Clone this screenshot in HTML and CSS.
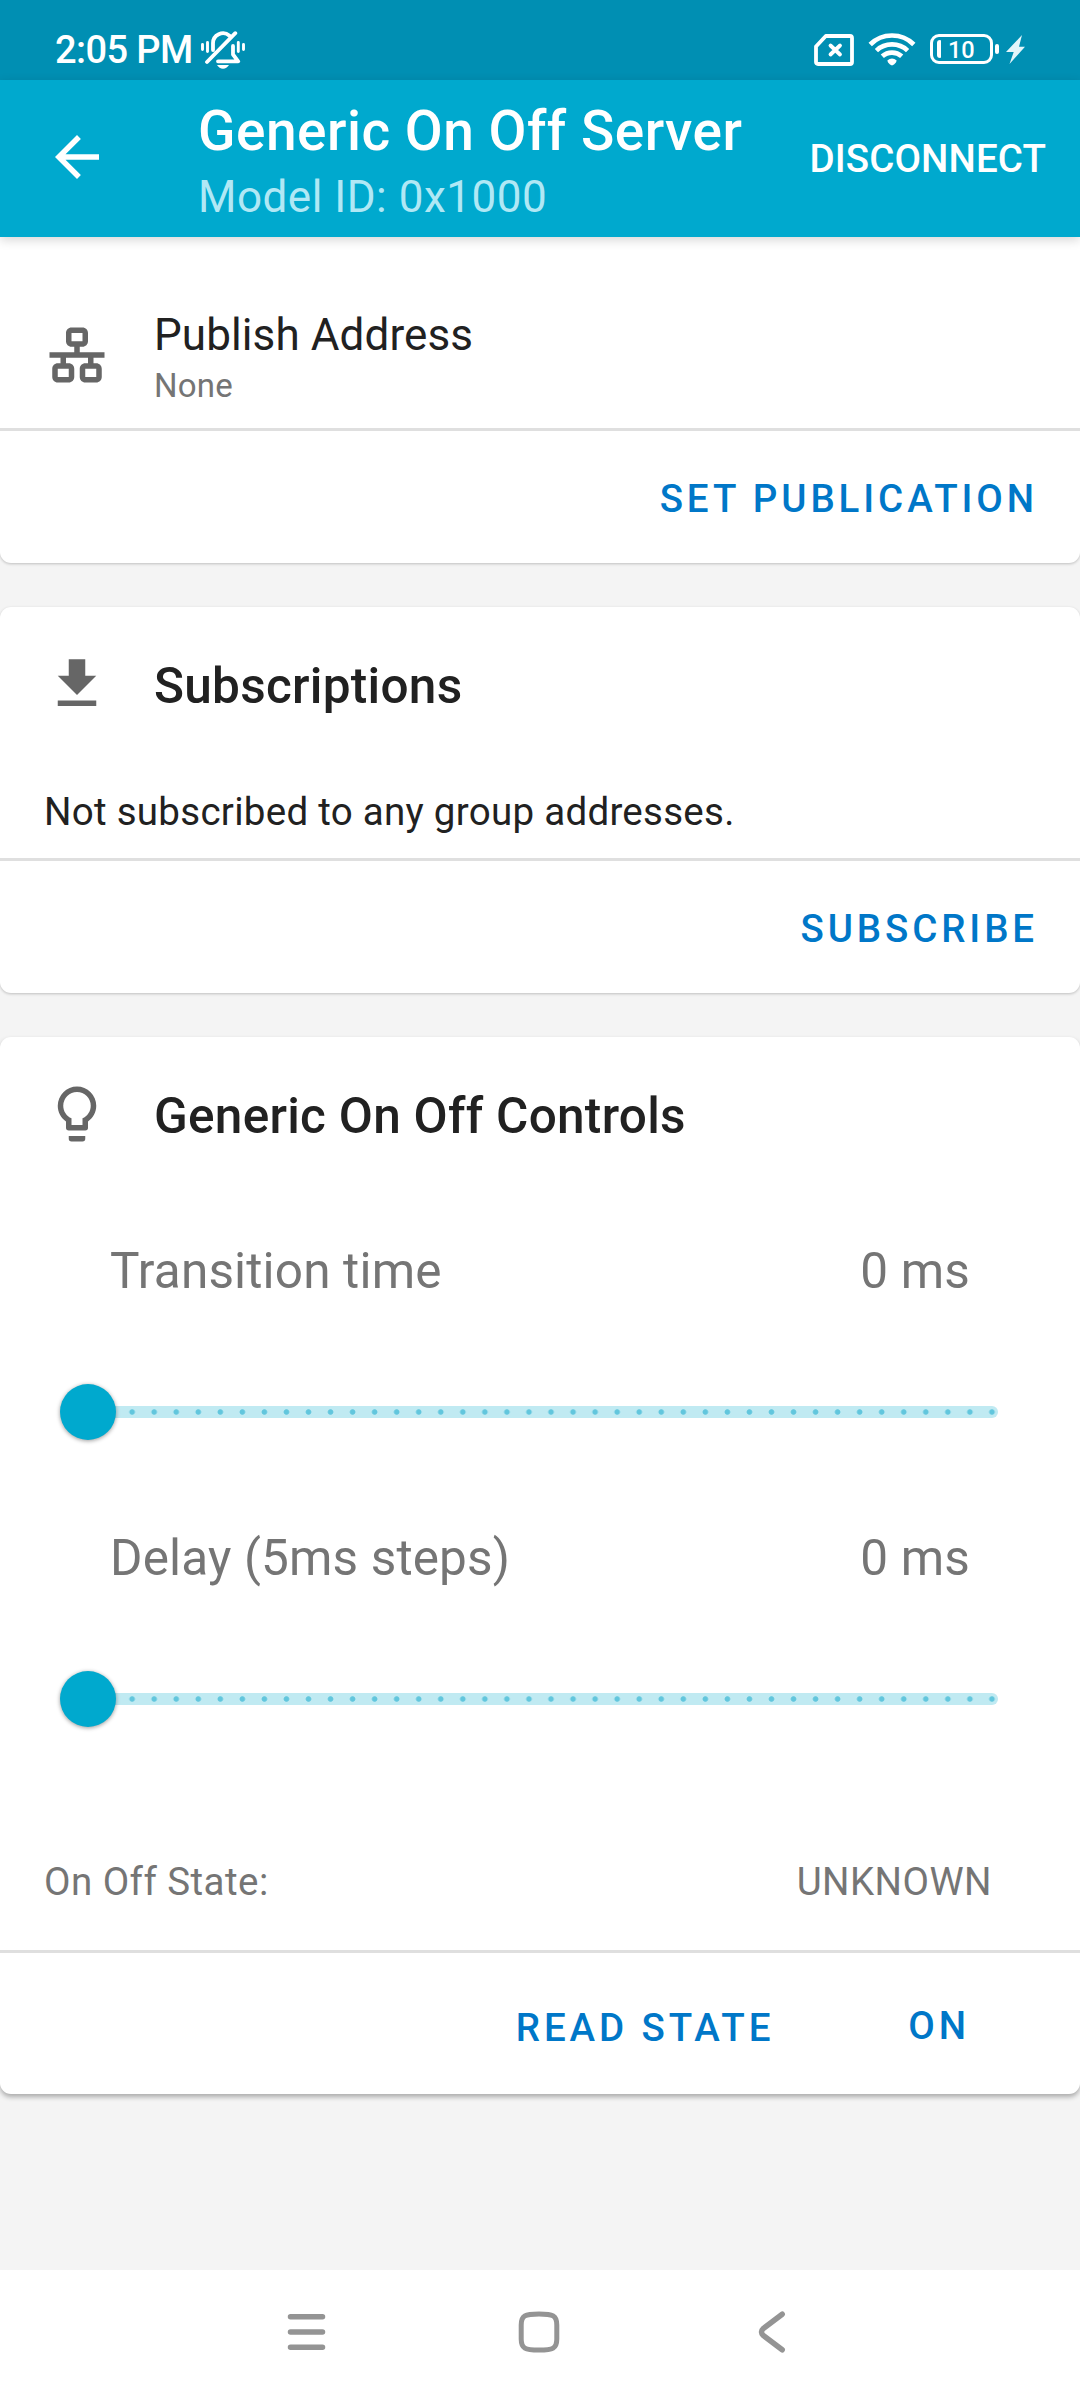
FILE: index.html
```html
<!DOCTYPE html>
<html lang="en">
<head>
<meta charset="utf-8">
<title>Generic On Off Server</title>
<link rel="stylesheet" href="styles.css">
</head>
<body>
<div class="screen">
  <header class="status-bar">
    <span class="clock">2:05 PM</span>
    <svg class="icon-bell" width="46" height="40" viewBox="200 30 46 40" fill="none" stroke="#fff" stroke-linecap="round" stroke-linejoin="round">
      <path stroke-width="2.9" d="M202.5 44.5v5M207.5 42.5v9M238.3 42.5v9M243.5 44.5v5"/>
      <path stroke-width="3.8" d="M213 50V43.500a10 10 0 0 1 16.500-7.800M235.300 33.200L207 62M233 46v8.500L238.200 61.300H218"/>
      <path fill="#fff" stroke="none" d="M217 65h12q-2.300 3.700-6 3.700t-6-3.700z"/>
    </svg>
    <div class="status-icons">
      <svg width="40" height="32" viewBox="0 0 40 32" fill="none" stroke="#fff" stroke-width="3.800" stroke-linejoin="round" stroke-linecap="round">
        <path d="M11.800 2H36Q38 2 38 4V28Q38 30 36 30H4Q2 30 2 28V12.500z"/>
        <path d="M16.500 11.500L26 20.500M26 11.500L16.500 20.500"/>
      </svg>
      <svg class="icon-wifi" width="48" height="36" viewBox="0 0 48 36" fill="none" stroke="#fff" stroke-width="4.700">
        <path d="M2.200 13.500C14 1.500 34 1.500 45.800 13.500"/>
        <path d="M8.400 19.600C17 11.400 31 11.400 39.600 19.600"/>
        <path d="M14.300 25.300C19.800 20.300 28.200 20.300 33.700 25.300"/>
        <path fill="#fff" stroke="none" d="M19.300 29.500Q24 25.300 28.700 29.500Q28.500 31.300 26 33.600Q24 35.200 22 33.600Q19.500 31.300 19.300 29.500z"/>
      </svg>
      <div class="battery"><i class="battery-level"></i><span class="battery-text">10</span></div>
      <i class="battery-cap"></i>
      <svg class="icon-bolt" width="19" height="29" viewBox="0 0 19 29"><path fill="#e3f5fa" d="M16 0L0 17H7.700L3.500 29L19 11.800H13z"/></svg>
    </div>
  </header>

  <div class="app-bar">
    <svg class="icon back" viewBox="0 0 24 24"><path d="M20,11H7.830l5.590-5.590L12,4l-8,8 8,8 1.410-1.410L7.830,13H20v-2z"/></svg>
    <div class="titles">
      <h1 class="title">Generic On Off Server</h1>
      <div class="subtitle">Model ID: 0x1000</div>
    </div>
    <span class="disconnect">DISCONNECT</span>
  </div>

  <main class="content">
    <section class="card card-publish">
      <div class="publish-row">
        <svg class="icon" viewBox="0 0 24 24"><path d="M10,2C8.890,2 8,2.890 8,4V7C8,8.110 8.890,9 10,9H11V11H2V13H6V15H5C3.890,15 3,15.890 3,17V20C3,21.110 3.890,22 5,22H9C10.110,22 11,21.110 11,20V17C11,15.890 10.110,15 9,15H8V13H16V15H15C13.890,15 13,15.890 13,17V20C13,21.110 13.890,22 15,22H19C20.110,22 21,21.110 21,20V17C21,15.890 20.110,15 19,15H18V13H22V11H13V9H14C15.110,9 16,8.110 16,7V4C16,2.890 15.110,2 14,2H10M10,4H14V7H10V4M5,17H9V20H5V17M15,17H19V20H15V17Z"/></svg>
        <div>
          <div class="row-title">Publish Address</div>
          <div class="row-summary">None</div>
        </div>
      </div>
      <div class="actions"><span class="button">SET PUBLICATION</span></div>
    </section>

    <section class="card card-subscriptions">
      <div class="card-header">
        <svg class="icon" viewBox="0 0 24 24"><path d="M5,20H19V18H5M19,9H15V3H9V9H5L12,16L19,9Z"/></svg>
        <h2 class="card-title">Subscriptions</h2>
      </div>
      <p class="note">Not subscribed to any group addresses.</p>
      <div class="actions"><span class="button">SUBSCRIBE</span></div>
    </section>

    <section class="card card-controls">
      <div class="card-header">
        <svg class="icon" viewBox="0 0 24 24"><path d="M12,2A7,7 0 0,1 19,9C19,11.380 17.810,13.470 16,14.740V17A1,1 0 0,1 15,18H9A1,1 0 0,1 8,17V14.740C6.190,13.470 5,11.380 5,9A7,7 0 0,1 12,2M9,21V20H15V21A1,1 0 0,1 14,22H10A1,1 0 0,1 9,21M12,4A5,5 0 0,0 7,9C7,11.050 8.230,12.810 10,13.580V16H14V13.580C15.770,12.810 17,11.050 17,9A5,5 0 0,0 12,4Z"/></svg>
        <h2 class="card-title">Generic On Off Controls</h2>
      </div>
      <div class="setting">
        <div class="setting-label"><span>Transition time</span><span>0 ms</span></div>
        <div class="slider"><i class="thumb"></i></div>
      </div>
      <div class="setting">
        <div class="setting-label"><span>Delay (5ms steps)</span><span>0 ms</span></div>
        <div class="slider"><i class="thumb"></i></div>
      </div>
      <div class="state"><span>On Off State:</span><span>UNKNOWN</span></div>
      <div class="actions state-actions"><span class="button read">READ STATE</span><span class="button on">ON</span></div>
    </section>
  </main>

  <nav class="nav-bar">
    <svg width="40" height="42" viewBox="0 0 40 42"><path d="M3.500 5.700h32M3.500 21h32M3.500 36.300h32"/></svg>
    <svg width="42" height="42" viewBox="0 0 42 42"><path d="M21 3C35 3 38.800 4.500 38.800 14V28C38.800 37.500 35 39 21 39S3.200 37.500 3.200 28V14C3.200 4.500 7 3 21 3z" class="home"/></svg>
    <svg width="28" height="42" viewBox="0 0 28 42"><path d="M24.200 3.200L5.300 17.500Q1.700 21 5.300 24.500L24.200 38.800"/></svg>
  </nav>
</div>
</body>
</html>
```
FILE: styles.css
```css
* { box-sizing: border-box; }

body {
  margin: 0;
  font-family: Roboto, "Liberation Sans", sans-serif;
  background: #f4f4f4;
  color: #212121;
}

h1, h2, p { margin: 0; font-weight: 500; }
svg { display: block; flex: none; }
span { white-space: nowrap; }

.screen {
  display: flex;
  flex-direction: column;
  width: 1080px;
  height: 2400px;
  overflow: hidden;
}

/* system status bar */
.status-bar {
  display: flex;
  flex: none;
  height: 80px;
  padding: 30px 55px 0 55px;
  background: #008fb3;
  color: #fff;
}
.clock {
  width: 145px;
  font-size: 38px;
  font-weight: 500;
  line-height: 40px;
  letter-spacing: -.6px;
}
.status-icons {
  display: flex;
  align-items: center;
  height: 40px;
  margin-left: auto;
}
.icon-wifi { margin: -2px 14px 0 14px; }
.battery {
  display: flex;
  align-items: center;
  width: 63px;
  height: 30px;
  margin-top: -2px;
  padding-left: 4px;
  border: 3px solid #fff;
  border-radius: 9px;
}
.battery-level {
  width: 4px;
  height: 18px;
  border-radius: 3px 1px 1px 3px;
  background: #fff;
}
.battery-text {
  margin: 2px 0 0 7px;
  font-size: 23.500px;
  font-weight: 500;
  line-height: 24px;
}
.battery-cap {
  width: 4px;
  height: 10px;
  margin: -2px 7px 0 2px;
  border-radius: 2px;
  background: #fff;
}
.icon-bolt { margin-top: -2px; }

/* toolbar */
.app-bar {
  position: relative;
  z-index: 1;
  display: flex;
  flex: none;
  align-items: center;
  height: 157px;
  padding: 0 34px 0 44px;
  background: #00a9ce;
  color: #fff;
  box-shadow: 0 3px 10px rgba(0, 0, 0, .16);
}
.icon {
  flex: none;
  width: 66px;
  height: 66px;
  fill: #666;
}
.icon.back { fill: #fff; margin-top: -3px; }
.titles { margin-left: 88px; padding-top: 11px; }
.title {
  font-size: 55px;
  line-height: 66px;
  letter-spacing: .5px;
}
.subtitle {
  font-size: 44px;
  line-height: 66px;
  letter-spacing: .5px;
  color: #b0e8f5;
}
.disconnect {
  margin-left: auto;
  font-size: 38.500px;
  font-weight: 500;
  line-height: 46px;
  letter-spacing: .1px;
}

/* cards */
.content {
  display: flex;
  flex: 1;
  flex-direction: column;
  gap: 44px;
}
.card {
  display: flex;
  flex: none;
  flex-direction: column;
  background: #fff;
  border-radius: 11px;
  box-shadow: 0 1px 3px rgba(0, 0, 0, .22);
}
.card-publish { height: 326px; border-radius: 0 0 11px 11px; }
.card-subscriptions { height: 386px; }
.card-controls { height: 1057px; box-shadow: 0 3px 5px rgba(0, 0, 0, .3); }

.publish-row {
  display: flex;
  flex: 1;
  align-items: flex-start;
  gap: 44px;
  padding: 74px 44px 0;
}
.publish-row .icon { margin-top: 11px; }
.row-title { font-size: 44px; line-height: 48px; letter-spacing: .1px; }
.row-summary { font-size: 33px; line-height: 54px; letter-spacing: .2px; color: #757575; }

.card-header {
  display: flex;
  flex: none;
  align-items: center;
  gap: 44px;
  height: 154px;
  padding: 0 44px;
}
.card-title { font-size: 49.500px; line-height: 60px; letter-spacing: .28px; padding-top: 4px; }
.note {
  flex: 1;
  padding: 28px 44px 0;
  font-size: 38.500px;
  font-weight: 400;
  line-height: 46px;
  letter-spacing: .28px;
}

.actions {
  display: flex;
  flex: none;
  align-items: center;
  justify-content: flex-end;
  height: 135px;
  padding: 3px 42px 0 0;
  border-top: 3px solid #dfdfdf;
}
.button {
  color: #0077c8;
  font-size: 38.500px;
  font-weight: 500;
  line-height: 46px;
  letter-spacing: 3.900px;
}

/* sliders */
.setting {
  flex: none;
  height: 287px;
  padding: 50px 82px 0;
}
.setting-label {
  display: flex;
  justify-content: space-between;
  padding: 0 28px;
  color: #757575;
  font-size: 49.500px;
  line-height: 60px;
  letter-spacing: .15px;
}
.slider {
  display: flex;
  align-items: center;
  width: 916px;
  height: 12px;
  margin-top: 105px;
  border-radius: 6px;
  background:
    radial-gradient(circle at center, #62c6dd 2.300px, transparent 3.200px) -5px 0 / 22.049px 12px repeat-x,
    #c0eaf2;
}
.thumb {
  width: 56px;
  height: 56px;
  margin-left: -22px;
  border-radius: 50%;
  background: #00a9ce;
  box-shadow: 0 1px 4px rgba(0, 0, 0, .4);
}

.state {
  display: flex;
  flex: 1;
  justify-content: space-between;
  padding: 94px 88px 0 44px;
  color: #757575;
  font-size: 38.500px;
  line-height: 46px;
  letter-spacing: .45px;
}
.state-actions {
  height: 144px;
  align-items: flex-start;
  padding: 52px 110px 0 0;
}
.button.read { margin-right: 134px; }
.button.on { margin-top: -2px; }

/* system navigation */
.nav-bar {
  display: grid;
  flex: none;
  grid-template-columns: 40px 42px 28px;
  column-gap: 191px;
  align-content: start;
  justify-content: start;
  height: 130px;
  padding: 41px 0 0 287px;
  background: #fff;
}
.nav-bar svg { fill: none; stroke: #949494; stroke-width: 5.500; stroke-linecap: round; }
.nav-bar svg:last-child { margin-left: 7px; }
.nav-bar .home { stroke-width: 5; }
```
